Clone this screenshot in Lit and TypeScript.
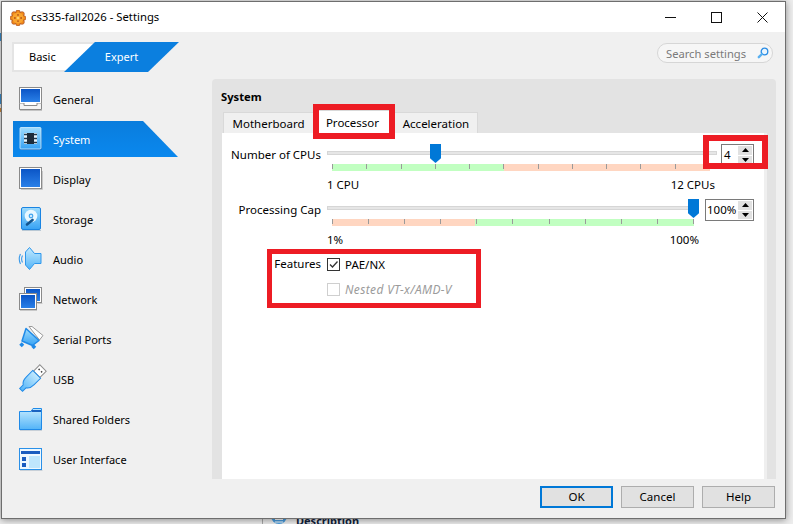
import { LitElement, html, css } from "lit";
import { customElement } from "lit/decorators.js";

const icons: Record<string, unknown> = {
  General: html`<svg class="ic" viewBox="0 0 24 24">
    <defs>
      <linearGradient id="scr" x1="0" y1="0" x2="0" y2="1"><stop offset="0" stop-color="#0b55c6"/><stop offset="1" stop-color="#2a80e8"/></linearGradient>
      <linearGradient id="lt" x1="0" y1="0" x2="0" y2="1"><stop offset="0" stop-color="#c4eafe"/><stop offset="1" stop-color="#52b4f8"/></linearGradient>
      <linearGradient id="lt2" x1="0" y1="0" x2="0" y2="1"><stop offset="0" stop-color="#9fdcfd"/><stop offset="1" stop-color="#36a2f4"/></linearGradient>
    </defs>
    <rect x=".5" y=".5" width="22" height="16" fill="#fff" stroke="#8a8a8a"/>
    <rect x="2" y="2" width="19" height="13" fill="url(#scr)"/>
    <path d="M.5 16.500V22.500H22.500V16.500" fill="#f4f4f4" stroke="#8a8a8a"/>
    <path d="M5 16v2.500H18V16" fill="#fff" stroke="#8a8a8a"/>
    <path d="M1 23.500H23" stroke="#c4c4c4"/>
  </svg>`,
  System: html`<svg class="ic" viewBox="0 0 24 24">
    <rect x="1.500" y="1" width="21" height="22" rx="1" fill="#0a62b8"/>
    <rect x="1" y=".5" width="21" height="21.500" rx="1" fill="url(#lt2)" stroke="#d4f0ff" stroke-width=".8"/>
    <rect x="5" y="6" width="13" height="11" fill="#e6f4fc"/>
    <rect x="8" y="6" width="7" height="11" fill="#1d2c3a"/>
    <path d="M5 7.500H8M5 11.500H8M5 15.500H8M15 7.500H18M15 11.500H18M15 15.500H18" stroke="#21384c" stroke-width="1.300"/>
  </svg>`,
  Display: html`<svg class="ic" viewBox="0 0 24 24">
    <rect x=".5" y=".5" width="22" height="21" fill="#fff" stroke="#8a8a8a"/>
    <rect x="2" y="2" width="19" height="18" fill="url(#scr)"/>
    <path d="M2 22.500H23.500V4" fill="none" stroke="#c8c8c8"/>
  </svg>`,
  Storage: html`<svg class="ic" viewBox="0 0 24 24">
    <rect x="2.500" y=".5" width="19" height="22" rx="1.500" fill="url(#lt2)" stroke="#1a84e2"/>
    <circle cx="12" cy="9" r="6.300" fill="#e8f7ff"/>
    <circle cx="12" cy="9" r="2.400" fill="#4aa8ef"/>
    <circle cx="12" cy="9" r="1" fill="#fff"/>
    <path d="M8 17.500L13.500 13" stroke="#12548f" stroke-width="2.600" stroke-linecap="round"/>
    <path d="M3 23.500H22" stroke="#b9c8d4"/>
  </svg>`,
  Audio: html`<svg class="ic" viewBox="0 0 24 24">
    <path d="M6.500 5L10.500.5 15.500 6.500H22V16.500H15.500L10.500 22.500 6.500 18Z" fill="url(#lt)" stroke="#2e97ec"/>
    <path d="M3.500 8.500Q1.700 12 3.500 15.500M1.500 7Q-1 12 1.500 17" fill="none" stroke="#3b9bea" stroke-width="1.100"/>
  </svg>`,
  Network: html`<svg class="ic" viewBox="0 0 24 24">
    <rect x="5.500" y=".5" width="17" height="15" fill="#fff" stroke="#8a8a8a"/>
    <rect x="7" y="2" width="14" height="12" fill="url(#scr)"/>
    <rect x=".5" y="6.500" width="17" height="16" fill="#fff" stroke="#8a8a8a"/>
    <rect x="2" y="8" width="14" height="13" fill="url(#scr)"/>
    <path d="M18.500 16.500H23.500M1 23.500H18" stroke="#c8c8c8"/>
  </svg>`,
  "Serial Ports": html`<svg class="ic" viewBox="0 0 24 24">
    <path d="M10-.5L13-.5 24 8.500 20.500 13Z" fill="#fff" stroke="#9a9a9a"/>
    <path d="M7 1.500L20 13.500 13.500 18.500 3 14Z" fill="url(#lt2)" stroke="#1f8ae8" stroke-width="1.500" stroke-linejoin="round"/>
    <rect x="1" y="16" width="3.500" height="3.500" fill="#1f8ae8" transform="rotate(45 2.750 17.750)"/>
    <rect x="13" y="18" width="3.500" height="3.500" fill="#1f8ae8" transform="rotate(45 14.750 19.750)"/>
  </svg>`,
  USB: html`<svg class="ic" viewBox="0 0 24 24">
    <g transform="translate(0 1) rotate(45 12 12)">
      <rect x="7.500" y="-5" width="9" height="9" fill="#fff" stroke="#8f8f8f"/>
      <rect x="9.500" y="-2" width="1.500" height="1.500" fill="#444"/>
      <rect x="13" y="-2" width="1.500" height="1.500" fill="#444"/>
      <path d="M6.500 4H17.500V13Q17.500 19 14 21V26H10V21Q6.500 19 6.500 13Z" fill="url(#lt)" stroke="#1f8ae8"/>
    </g>
  </svg>`,
  "Shared Folders": html`<svg class="ic" viewBox="0 0 24 24">
    <path d="M.5 4.500H12L14 1.500H22.500V22.500H.5Z" fill="url(#lt)" stroke="#1f8ae8"/>
    <path d="M12.500 4H22" stroke="#1a62c0" stroke-width="2"/>
    <path d="M1 23.500H23" stroke="#c8d0d8"/>
  </svg>`,
  "User Interface": html`<svg class="ic" viewBox="0 0 24 24">
    <rect x=".5" y="1.500" width="22" height="21" fill="#eef8ff" stroke="#2a90e8"/>
    <rect x="2" y="4" width="19" height="3" fill="#1a5cc0"/>
    <rect x="10" y="9" width="11" height="12" fill="#bfe6fd"/>
    <rect x="3" y="10" width="4" height="4" fill="#1a5cc0"/>
    <rect x="3" y="16" width="4" height="4" fill="#1a5cc0"/>
    <path d="M1 23.500H23.500" stroke="#c8d0d8"/>
  </svg>`,
};

const appIcon = html`<svg class="app" viewBox="0 0 16 16">
  <g fill="#f08a1c" stroke="#a8481a" stroke-width=".7">
    <circle cx="8" cy="2.400" r="2.300"/><circle cx="13.600" cy="8" r="2.300"/><circle cx="8" cy="13.600" r="2.300"/><circle cx="2.400" cy="8" r="2.300"/>
    <circle cx="12" cy="4" r="2.300"/><circle cx="12" cy="12" r="2.300"/><circle cx="4" cy="12" r="2.300"/><circle cx="4" cy="4" r="2.300"/>
  </g>
  <circle cx="8" cy="8" r="5.600" fill="#f9a42e"/>
  <g fill="#b4531a"><circle cx="8" cy="4.900" r=".9"/><circle cx="11.100" cy="8" r=".9"/><circle cx="8" cy="11.100" r=".9"/><circle cx="4.900" cy="8" r=".9"/></g>
  <circle cx="8" cy="8" r="1.300" fill="#ffd070"/>
</svg>`;

const spinArrows = html`<span class="btns">
  <span class="b"><svg viewBox="0 0 7 4" class="ar"><path d="M3.500 0L7 4H0Z"/></svg></span>
  <span class="b"><svg viewBox="0 0 7 4" class="ar"><path d="M0 0H7L3.500 4Z"/></svg></span>
</span>`;

@customElement("app-root")
export class AppRoot extends LitElement {
  static styles = css`
    :host {
      display: block;
      position: relative;
      width: 793px;
      height: 524px;
      overflow: hidden;
      background: #ededed;
      font-family: "Noto Sans", "Open Sans", sans-serif;
      font-size: 11.5px;
      color: #000;
    }
    .bg-line { position: absolute; left: 262px; top: 500px; width: 1px; height: 24px; background: #a8a8a8; }
    .bg-desc { position: absolute; left: 296px; top: 513px; font-weight: 700; font-size: 11px; line-height: 16px; color: #10203a; }
    .bg-ic { position: absolute; left: 271px; top: 508px; width: 16px; height: 16px; }
    .bg-frag { position: absolute; left: 0; width: 1px; }
    .f1 { top: 33px; height: 8px; background: #3b8fd0; }
    .f2 { top: 94px; height: 10px; background: #3b8fd0; }
    .f3 { top: 108px; height: 4px; background: #d08a3b; }

    .window {
      position: absolute;
      left: 1px;
      top: 1px;
      width: 785px;
      height: 518px;
      box-sizing: border-box;
      border: 1px solid #6e6e6e;
      background: #f0f0f0;
      box-shadow: 0 1px 7px rgba(0, 0, 0, 0.42);
      display: flex;
      flex-direction: column;
    }
    .title {
      height: 30px;
      background: #fff;
      display: flex;
      align-items: center;
      padding-left: 8px;
      flex: none;
    }
    .app { width: 16px; height: 16px; margin-right: 5px; margin-top: 1px; }
    .title-text { flex: 1; font-size: 11.3px; padding-bottom: 2px; }
    .wb { width: 46px; height: 30px; display: flex; align-items: center; justify-content: center; }
    .wb svg { width: 11px; height: 11px; fill: none; stroke: #111; stroke-width: 1; }

    .top { height: 47px; flex: none; display: flex; justify-content: space-between; padding: 10px 12px 0 10px; box-sizing: border-box; }
    .mode { display: flex; width: 167px; height: 30px; font-size: 11px; }
    .basic {
      width: 84px;
      margin-right: -32px;
      box-sizing: border-box;
      background: #fff;
      border: 2px solid #e4e4e4;
      border-right: none;
      padding-left: 15px;
      line-height: 26px;
      flex: none;
    }
    .expert {
      flex: 1;
      background: #0b7fdf;
      color: #fff;
      text-align: center;
      line-height: 30px;
      clip-path: polygon(31px 0, 100% 0, 84px 100%, 0 100%);
    }
    .search {
      width: 116px;
      height: 20px;
      margin-top: 1px;
      box-sizing: border-box;
      border: 1px solid #d6d6d6;
      border-radius: 10px;
      background: #f6f6f6;
      color: #7a7a7a;
      display: flex;
      align-items: center;
      justify-content: space-between;
      padding: 0 3px 0 8px;
      font-size: 11.2px;
    }
    .search svg { width: 12px; height: 12px; }

    .mid { height: 400px; flex: none; display: flex; }
    .side { width: 210px; flex: none; font-size: 11px; }
    .item {
      display: flex;
      align-items: center;
      gap: 10px;
      width: 165px;
      height: 40px;
      margin-left: 11px;
      padding-left: 6px;
      box-sizing: border-box;
    }
    .item.sel {
      height: 36px;
      margin-top: 2px;
      margin-bottom: 2px;
      background: linear-gradient(#0a7ddd, #0a88ee);
      color: #fff;
      clip-path: polygon(0 0, 130px 0, 100% 100%, 0 100%);
    }
    .ic { width: 24px; height: 24px; flex: none; overflow: visible; }

    .panel {
      width: 564px;
      flex: none;
      box-sizing: border-box;
      background: #e3e3e3;
      border-radius: 4px 4px 0 0;
      padding: 10px 9px 0 10px;
      display: flex;
      flex-direction: column;
    }
    .h { font-weight: 700; height: 16px; line-height: 16px; margin: 0 0 7px -1px; flex: none; font-size: 11.2px; }
    .tabs { display: grid; grid-template-columns: 91px 80px 84px; margin-left: 1px; height: 21px; flex: none; }
    .tab {
      box-sizing: border-box;
      background: #f0f0f0;
      border: 1px solid #d9d9d9;
      border-bottom: none;
      text-align: center;
      line-height: 22px;
    }
    .tab.on { background: #fff; margin-top: -2px; height: 23px; line-height: 23px; padding-right: 3px; }
    .pane {
      flex: 1;
      background: #fff;
      border-right: 3px solid #efefef;
      padding: 11px 10px 0 0;
    }
    .row { display: flex; height: 27px; }
    .lab { width: 99px; margin-right: 6px; text-align: right; flex: none; line-height: 22px; }
    .slider { position: relative; flex: none; }
    .s1 { width: 390px; margin-right: 4px; }
    .s2 { width: 372px; margin-right: 6px; }
    .track { height: 4px; margin-top: 7px; box-sizing: border-box; background: #e6e6e6; border: 1px solid #d6d6d6; }
    .strip { height: 7px; margin: 9px 0 0 5px; display: flex; justify-content: space-between; }
    .s1 .strip { margin-right: 7px; }
    .s2 .strip { margin-right: 5px; }
    .tick { width: 1px; height: 5px; background: #9a9a9a; }
    .thumb {
      position: absolute;
      top: 0;
      width: 11px;
      height: 19px;
      background: #0078d7;
      clip-path: polygon(0 0, 100% 0, 100% 75%, 50% 100%, 0 75%);
    }
    .legend { display: flex; justify-content: space-between; margin: 7px 0 7px 105px; height: 14px; line-height: 14px; }
    .l1 { width: 388px; }
    .l2 { width: 372px; }
    .spin {
      width: 33px;
      height: 22px;
      box-sizing: border-box;
      border: 1px solid #7a7a7a;
      display: flex;
      justify-content: space-between;
      line-height: 20px;
      padding: 0 1px 0 2px;
      background: #fff;
      flex: none;
    }
    .spin.w { width: 49px; padding-left: 1px; }
    .btns { display: flex; flex-direction: column; width: 14px; gap: 1px; padding: 1px 0; }
    .b { flex: 1; background: #e1e1e1; display: flex; align-items: center; justify-content: center; }
    .ar { width: 7px; height: 4px; fill: #000; }

    .features { display: grid; grid-template-columns: 99px auto; column-gap: 6px; row-gap: 1px; justify-content: start; margin-top: -2px; }
    .flab { text-align: right; line-height: 24px; }
    .check { height: 24px; display: flex; align-items: center; gap: 5px; }
    .box { width: 13px; height: 13px; box-sizing: border-box; border: 1px solid #333; background: #fff; flex: none; }
    .box svg { display: block; width: 11px; height: 11px; fill: none; stroke: #333; stroke-width: 1.300; }
    .check.off { color: #9b9b9b; font-style: italic; font-size: 12px; letter-spacing: 0.35px; }
    .check.off .box { border-color: #cfcfcf; }
    .cell-empty { height: 24px; }

    .foot { flex: 1; display: flex; justify-content: flex-end; gap: 8px; padding: 7px 10px 0 0; box-sizing: border-box; }
    .btn {
      width: 73px;
      height: 22px;
      box-sizing: border-box;
      background: #e1e1e1;
      border: 1px solid #adadad;
      text-align: center;
      line-height: 20px;
    }
    .btn.def { border: 2px solid #0078d7; line-height: 18px; }

    .red { position: absolute; box-sizing: border-box; border: 6px solid #ed1c24; }
    .r1 { left: 313px; top: 104px; width: 82px; height: 35px; }
    .r2 { left: 703px; top: 135px; width: 65px; height: 34px; }
    .r3 { left: 267px; top: 249px; width: 214px; height: 59px; border-width: 5px; }
  `;

  render() {
    const items = ["General", "System", "Display", "Storage", "Audio", "Network", "Serial Ports", "USB", "Shared Folders", "User Interface"];
    const ticks = (n: number) => Array.from({ length: n }, () => html`<i class="tick"></i>`);
    const stripBg = (a: string, b: string, pct: number) => `background:linear-gradient(90deg,${a} ${pct}%,${b} ${pct}%)`;
    return html`
      <i class="bg-frag f1"></i><i class="bg-frag f2"></i><i class="bg-frag f3"></i>
      <i class="bg-line"></i>
      <svg class="bg-ic" viewBox="0 0 16 16"><circle cx="8" cy="8" r="8" fill="#4a9ee0"/><path d="M4 11.500H12M4 14H12" stroke="#fff"/></svg>
      <span class="bg-desc">Description</span>

      <div class="window">
        <div class="title">
          ${appIcon}
          <span class="title-text">cs335-fall2026 - Settings</span>
          <span class="wb"><svg viewBox="0 0 11 11"><path d="M0 5.500H11"/></svg></span>
          <span class="wb"><svg viewBox="0 0 11 11"><rect x=".5" y=".5" width="10" height="10"/></svg></span>
          <span class="wb"><svg viewBox="0 0 11 11"><path d="M.5 .5L10.500 10.500M10.500 .5L.5 10.500"/></svg></span>
        </div>
        <div class="top">
          <div class="mode"><span class="basic">Basic</span><span class="expert">Expert</span></div>
          <div class="search">
            <span>Search settings</span>
            <svg viewBox="0 0 12 12"><circle cx="7.500" cy="4.500" r="3.300" fill="#eaf5fd" stroke="#2a8ce4" stroke-width="1.300"/><path d="M5 7L1.800 10.200" stroke="#5ab0f0" stroke-width="2.400" stroke-linecap="round"/></svg>
          </div>
        </div>
        <div class="mid">
          <nav class="side">
            ${items.map((t) => html`<div class="item ${t === "System" ? "sel" : ""}">${icons[t]}<span>${t}</span></div>`)}
          </nav>
          <section class="panel">
            <div class="h">System</div>
            <div class="tabs">
              <div class="tab">Motherboard</div>
              <div class="tab on">Processor</div>
              <div class="tab">Acceleration</div>
            </div>
            <div class="pane">
              <div class="row">
                <span class="lab">Number of CPUs</span>
                <div class="slider s1">
                  <div class="track"></div>
                  <div class="strip" style=${stripBg("#c1ffc1", "#ffd6c1", 45.5)}>${ticks(12)}</div>
                  <div class="thumb" style="left:103px"></div>
                </div>
                <div class="spin"><span>4</span>${spinArrows}</div>
              </div>
              <div class="legend l1"><span>1 CPU</span><span>12 CPUs</span></div>
              <div class="row">
                <span class="lab">Processing Cap</span>
                <div class="slider s2">
                  <div class="track"></div>
                  <div class="strip" style=${stripBg("#ffd6c1", "#c1ffc1", 39.6)}>${ticks(11)}</div>
                  <div class="thumb" style="left:361px"></div>
                </div>
                <div class="spin w"><span>100%</span>${spinArrows}</div>
              </div>
              <div class="legend l2"><span>1%</span><span>100%</span></div>
              <div class="features">
                <span class="flab">Features</span>
                <div class="check"><span class="box"><svg viewBox="0 0 11 11"><path d="M2 5.500L4.500 8 9.500 2.500"/></svg></span><span>PAE/NX</span></div>
                <span class="cell-empty"></span>
                <div class="check off"><span class="box"></span><span>Nested VT-x/AMD-V</span></div>
              </div>
            </div>
          </section>
        </div>
        <div class="foot">
          <div class="btn def">OK</div>
          <div class="btn">Cancel</div>
          <div class="btn">Help</div>
        </div>
      </div>
      <i class="red r1"></i><i class="red r2"></i><i class="red r3"></i>
    `;
  }
}
